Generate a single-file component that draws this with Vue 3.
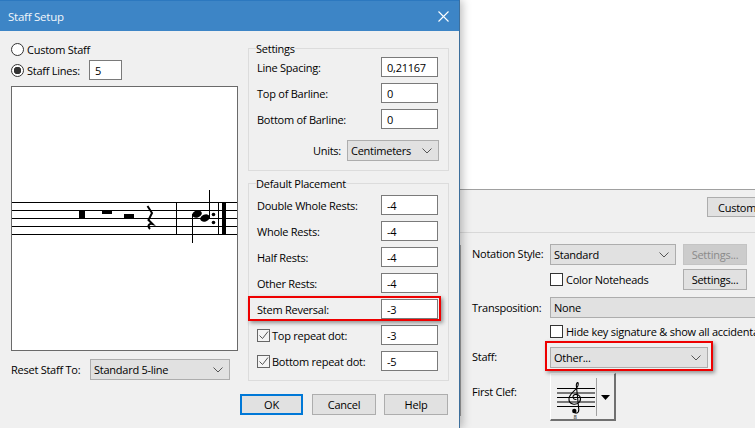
<script setup>
const topRows = [
  { label: 'Line Spacing:', value: '0,21167' },
  { label: 'Top of Barline:', value: '0' },
  { label: 'Bottom of Barline:', value: '0' },
]
const placeRows = [
  { label: 'Double Whole Rests:', value: '-4' },
  { label: 'Whole Rests:', value: '-4' },
  { label: 'Half Rests:', value: '-4' },
  { label: 'Other Rests:', value: '-4' },
  { label: 'Stem Reversal:', value: '-3' },
  { label: 'Top repeat dot:', value: '-3', check: true },
  { label: 'Bottom repeat dot:', value: '-5', check: true },
]
const staffY = [202, 210, 218, 226, 234]
const clefY = [15.5, 20, 24.5, 29, 33.5]
</script>

<template>
  <div class="desk">
    <section class="backwin">
      <div class="backtop"><span class="btn custom">Customize...</span></div>
      <div class="form">
        <div class="frow r1">
          <span class="lab up">Notation Style:</span>
          <div class="sel w126"><span>Standard</span><svg class="chev" width="10" height="6" viewBox="0 0 10 6"><path d="M.5.5 5 5 9.5.5" /></svg></div>
          <span class="btn set dis">Settings...</span>
        </div>
        <div class="frow r2">
          <span class="lab"></span>
          <span class="chk"></span><span class="chktext w117">Color Noteheads</span>
          <span class="btn set">Settings...</span>
        </div>
        <div class="frow r3">
          <span class="lab">Transposition:</span>
          <div class="sel wide"><span>None</span></div>
        </div>
        <div class="frow r4">
          <span class="lab"></span>
          <span class="chk"></span><span class="chktext nowrap">Hide key signature &amp; show all accidentals</span>
        </div>
        <div class="frow r5">
          <span class="lab up">Staff:</span>
          <div class="sel w158"><span>Other...</span><svg class="chev" width="10" height="6" viewBox="0 0 10 6"><path d="M.5.5 5 5 9.5.5" /></svg></div>
        </div>
        <div class="frow r6">
          <span class="lab clef-lab">First Clef:</span>
          <div class="clefbtn">
            <svg width="63" height="46" viewBox="1 1 63 46">
              <path v-for="y in clefY" :key="y" :d="`M7 ${y}H45`" class="cl" />
              <path d="M46.500 5V43" class="cdiv" />
              <path d="M26.500 26.500C23 27 21.500 22.500 25 21.500C29.500 20.500 32 25.500 29.500 29C26 33 18.500 31.500 19 25.500C19.500 20 27 17 28 12.500C28.800 9 26.800 8.500 26.300 12L28.800 36.500C28.800 41 24.500 41 24 38" class="treble" />
              <circle cx="24.300" cy="38" r="2.200" />
              <text x="25" y="46" class="eight">8</text>
              <path d="M51 22H60L55.500 27Z" />
            </svg>
          </div>
        </div>
        <div class="redbox staffmark"></div>
      </div>
    </section>

    <section class="dialog">
      <header class="title">
        <span>Staff Setup</span>
        <svg class="close" width="11" height="11" viewBox="0 0 11 11"><path d="M.5.5 10.500 10.500M10.500.5 .5 10.500" /></svg>
      </header>
      <div class="body">
        <div class="left">
          <div class="radio-row"><span class="radio"></span><span>Custom Staff</span></div>
          <div class="radio-row lines"><span class="radio on"></span><span class="lines-text">Staff Lines:</span><input class="num small" value="5" readonly /></div>
          <div class="preview">
            <svg width="225" height="263" viewBox="12 87 225 263">
              <path v-for="y in staffY" :key="y" :d="`M12 ${y + 0.5}H237`" class="st" />
              <path d="M176.500 202V235M218.500 202V235" class="st" />
              <rect x="222" y="202" width="4" height="33" />
              <rect x="79" y="210" width="6" height="8" />
              <rect x="102" y="210" width="10" height="4" />
              <rect x="124" y="214" width="10" height="4" />
              <path d="M147.500 206L152 213L148.500 220L152.500 224C149 223 147 226 150 229" class="rest" />
              <ellipse cx="197" cy="214" rx="5" ry="3.500" transform="rotate(-22 197 214)" />
              <ellipse cx="205" cy="218" rx="5" ry="3.500" transform="rotate(-22 205 218)" />
              <path d="M192.500 214V243M209.500 190V218" class="st" />
              <circle cx="213.500" cy="214.500" r="1.800" />
              <circle cx="213.500" cy="222.500" r="1.800" />
            </svg>
          </div>
          <div class="reset">
            <span class="reset-lab">Reset Staff To:</span>
            <div class="sel w140"><span>Standard 5-line</span><svg class="chev" width="10" height="6" viewBox="0 0 10 6"><path d="M.5.5 5 5 9.500.5" /></svg></div>
          </div>
        </div>
        <div class="right">
          <div class="group">
            <div class="legend">Settings</div>
            <div v-for="r in topRows" :key="r.label" class="grow">
              <span>{{ r.label }}</span>
              <input class="num" :value="r.value" readonly />
            </div>
            <div class="units">
              <span>Units:</span>
              <div class="sel w92"><span>Centimeters</span><svg class="chev" width="10" height="6" viewBox="0 0 10 6"><path d="M.5.5 5 5 9.500.5" /></svg></div>
            </div>
          </div>
          <div class="group second">
            <div class="legend">Default Placement</div>
            <div v-for="r in placeRows" :key="r.label" class="grow">
              <span class="glabel">
                <span v-if="r.check" class="chk small-chk">
                  <svg width="11" height="11" viewBox="0 0 11 11"><path d="M1.500 5.500 4.500 8.500 10 1.500" /></svg>
                </span>
                {{ r.label }}
              </span>
              <input class="num" :value="r.value" readonly />
            </div>
          </div>
          <div class="actions">
            <span class="btn act ok">OK</span>
            <span class="btn act">Cancel</span>
            <span class="btn act help">Help</span>
          </div>
        </div>
      </div>
      <div class="redbox stemmark"></div>
    </section>
  </div>
</template>

<style scoped>
.desk {
  position: relative;
  width: 755px;
  height: 428px;
  overflow: hidden;
  background: #fff;
  font-family: "Open Sans", "Noto Sans", sans-serif;
  font-size: 11px;
  letter-spacing: -0.25px;
  color: #000;
}
.dialog {
  position: absolute;
  left: 0;
  top: 0;
  width: 460px;
  height: 428px;
  box-sizing: border-box;
  background: #f0f0f0;
  border-right: 1px solid #3d6f9c;
  box-shadow: 2px 0 9px rgba(0, 0, 0, 0.28);
}
.title {
  height: 31px;
  box-sizing: border-box;
  border-top: 1px solid #2c78bf;
  background: #3d85c6;
  color: #f2f7fb;
  font-size: 11.500px;
  display: flex;
  align-items: center;
  justify-content: space-between;
  padding: 0 10px 0 8px;
}
.close path { stroke: #fff; stroke-width: 1.100; fill: none; }
.body {
  display: grid;
  grid-template-columns: 227px 201px;
  column-gap: 10px;
  padding-left: 11px;
}
.left { padding-top: 12px; }
.radio-row { display: flex; align-items: center; height: 13px; gap: 3px; }
.radio-row.lines { height: 20px; margin-top: 4px; }
.lines-text { width: 59px; }
.radio {
  width: 13px;
  height: 13px;
  box-sizing: border-box;
  border: 1px solid #333;
  border-radius: 50%;
  background: #fff;
  flex: none;
}
.radio.on { background: radial-gradient(circle, #333 0 3.500px, #fff 4px); }
.num {
  width: 57px;
  height: 20px;
  box-sizing: border-box;
  border: 1px solid #7a7a7a;
  background: #fff;
  padding: 0 5px;
  margin: 0;
  font: inherit;
  letter-spacing: inherit;
  color: #000;
  outline: none;
  flex: none;
}
.num.small { width: 33px; }
.preview {
  margin-top: 6px;
  width: 227px;
  height: 265px;
  box-sizing: border-box;
  border: 1px solid #6a6a6a;
  background: #fff;
}
.preview svg { display: block; }
.st { stroke: #000; stroke-width: 1; fill: none; }
.rest { stroke: #000; stroke-width: 2; fill: none; }
.reset { display: flex; align-items: center; margin-top: 8px; }
.reset-lab { width: 79px; flex: none; }
.sel {
  box-sizing: border-box;
  height: 21px;
  border: 1px solid #adadad;
  background: #e1e1e1;
  display: flex;
  align-items: center;
  justify-content: space-between;
  padding: 0 6px 0 3px;
  flex: none;
}
.chev path { stroke: #555; fill: none; stroke-width: 1; }
.w140 { width: 140px; }
.w92 { width: 92px; }
.w126 { width: 126px; }
.w158 { width: 158px; }
.wide { width: 230px; }
.right { padding-top: 17px; }
.group {
  border: 1px solid #dcdcdc;
  padding: 0 10px 9px 8px;
}
.second { margin-top: 12px; }
.second .legend { margin-bottom: 3px; }
.legend {
  margin: -8px 0 0 -1px;
  height: 16px;
  line-height: 16px;
  background: #f0f0f0;
  width: fit-content;
}
.grow {
  display: flex;
  align-items: center;
  justify-content: space-between;
  height: 20px;
  margin-top: 6px;
}
.legend + .grow { margin-top: 0; }
.glabel { display: flex; align-items: center; gap: 2px; }
.units {
  display: flex;
  align-items: center;
  justify-content: flex-end;
  gap: 6px;
  height: 21px;
  margin: 11px -1px 0 0;
}
.actions { display: flex; gap: 9px; margin: 13px 0 0 -8px; }
.btn {
  box-sizing: border-box;
  border: 1px solid #adadad;
  background: #e1e1e1;
  display: flex;
  align-items: center;
  justify-content: center;
  white-space: nowrap;
  flex: none;
}
.act { width: 64px; height: 21px; }
.ok { width: 63px; border: 2px solid #0078d7; }
.help { margin-left: -1px; }
.chk {
  width: 13px;
  height: 13px;
  box-sizing: border-box;
  border: 1px solid #333;
  background: #fff;
  flex: none;
  display: block;
}
.small-chk { border-color: #666; background: #f4f4f4; }
.small-chk svg { display: block; }
.small-chk path { stroke: #555; fill: none; stroke-width: 1; }
.redbox {
  position: absolute;
  box-sizing: border-box;
  border: 2px solid #ee0000;
  box-shadow: 2px 2px 4px rgba(0, 0, 0, 0.4);
  pointer-events: none;
}
.stemmark { left: 248px; top: 296px; width: 193px; height: 25px; }
.backwin {
  position: absolute;
  left: 460px;
  top: 189px;
  width: 295px;
  height: 239px;
  background: #f0f0f0;
  border-top: 1px solid #a0a0a0;
  box-sizing: border-box;
}
.backtop {
  height: 43px;
  box-sizing: border-box;
  border-bottom: 1px solid #d8d8d8;
  padding: 7px 0 0 247px;
  display: flex;
}
.custom { width: 90px; height: 20px; justify-content: flex-start; padding-left: 10px; overflow: hidden; }
.form { position: relative; padding-left: 12px; padding-top: 11px; }
.form::before {
  content: "";
  position: absolute;
  left: 0;
  top: 12px;
  width: 1px;
  height: 171px;
  background: #a0a0a0;
}
.frow { display: flex; align-items: center; }
.lab { width: 78px; flex: none; }
.up { margin-top: -2px; }
.r1 { height: 21px; }
.r2 { height: 21px; margin-top: 4px; }
.r3 { height: 21px; margin-top: 7px; }
.r4 { height: 13px; margin-top: 7px; }
.r5 { height: 21px; margin-top: 9px; }
.r6 { height: 48px; margin-top: 5px; align-items: flex-start; }
.clef-lab { margin-top: 11px; }
.set { width: 64px; height: 21px; margin-left: 7px; }
.dis { color: #8a8a8a; background: #cccccc; border-color: #c4c4c4; }
.r2 .set { margin-left: 0; }
.chktext { padding-left: 3px; }
.w117 { width: 120px; box-sizing: border-box; }
.nowrap { white-space: nowrap; }
.clefbtn {
  width: 66px;
  height: 48px;
  box-sizing: border-box;
  background: #f0f0f0;
  border-left: 1px solid #fff;
  border-top: 1px solid #fff;
  border-right: 2px solid #707070;
  border-bottom: 2px solid #707070;
}
.clefbtn svg { display: block; }
.cl { stroke: #000; stroke-width: 1; }
.cdiv { stroke: #a0a0a0; stroke-width: 1; }
.treble { stroke: #000; stroke-width: 1.100; fill: none; }
.eight { font-size: 6px; text-anchor: middle; }
.staffmark { left: 85px; top: 108px; width: 168px; height: 30px; }
</style>
